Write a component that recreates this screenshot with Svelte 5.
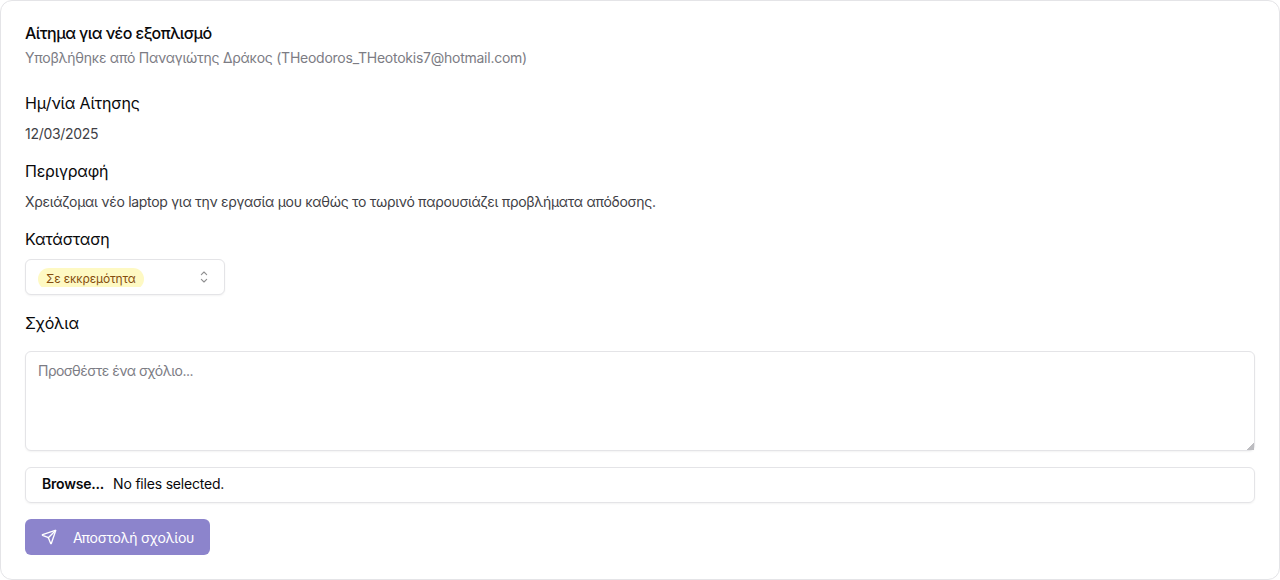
<script>
  let comment = $state('');
</script>

<div class="card">
  <header class="head">
    <h1>Αίτημα για νέο εξοπλισμό</h1>
    <p class="sub">Υποβλήθηκε από Παναγιώτης Δράκος (THeodoros_THeotokis7@hotmail.com)</p>
  </header>
  <section class="block">
    <h2>Ημ/νία Αίτησης</h2>
    <p>12/03/2025</p>
  </section>
  <section class="block">
    <h2>Περιγραφή</h2>
    <p>Χρειάζομαι νέο laptop για την εργασία μου καθώς το τωρινό παρουσιάζει προβλήματα απόδοσης.</p>
  </section>
  <section class="block">
    <h2>Κατάσταση</h2>
    <button class="select" type="button">
      <span class="value"><span class="badge">Σε εκκρεμότητα</span></span>
      <svg class="chev" width="16" height="16" viewBox="0 0 24 24" fill="none" stroke="currentColor" stroke-width="1.6" stroke-linecap="round" stroke-linejoin="round"><path d="m8 15.5 4 4 4-4"/><path d="m8 8.5 4-4 4 4"/></svg>
    </button>
  </section>
  <section class="comments">
    <h2>Σχόλια</h2>
    <textarea placeholder="Προσθέστε ένα σχόλιο..." bind:value={comment}></textarea>
    <div class="file"><b>Browse...</b><span>No files selected.</span></div>
    <button class="send" type="button">
      <svg width="16" height="16" viewBox="0 0 24 24" fill="none" stroke="currentColor" stroke-width="2" stroke-linecap="round" stroke-linejoin="round"><path d="M14.536 21.686a.5.5 0 0 0 .937-.024l6.5-19a.496.496 0 0 0-.635-.635l-19 6.5a.5.5 0 0 0-.024.937l7.93 3.18a2 2 0 0 1 1.112 1.11z"/><path d="m21.854 2.147-10.94 10.939"/></svg>
      Αποστολή σχολίου
    </button>
  </section>
</div>

<style>
  :global(body) { margin: 0; background: #fff; }
  .card {
    box-sizing: border-box; width: 1280px; height: 580px; padding: 24px;
    border: 1px solid #e4e4e7; border-radius: 12px; background: #fff;
    font-family: Inter, sans-serif; color: #09090b;
  }
  h1 { margin: 0; font-size: 16px; line-height: 16px; font-weight: 500; letter-spacing: -0.57px; }
  h2 { margin: 0; font-size: 16px; line-height: 24px; font-weight: 400; letter-spacing: -0.2px; }
  p { margin: 0; }
  .sub { margin-top: 7px; font-size: 14px; line-height: 20px; color: #7c7c84; letter-spacing: -0.25px; }
  .head { margin-bottom: 23px; }
  .block { margin-bottom: 16px; }
  .block p { margin-top: 9px; margin-bottom: -1px; font-size: 14px; line-height: 20px; color: #3f3f46; letter-spacing: -0.3px; }
  .select {
    box-sizing: border-box; display: flex; align-items: center; justify-content: space-between;
    width: 200px; height: 36px; margin-top: 8px; padding: 0 12px; border: 1px solid #e4e4e7;
    border-radius: 6px; background: #fff; color: #09090b; box-shadow: 0 1px 2px rgba(0,0,0,.05);
    font: inherit;
  }
  .chev { opacity: .45; }
  .value { display: block; height: 20px; overflow: hidden; }
  .badge { display: inline-block; padding: 3px 8px; border-radius: 999px; background: #fef9c3; color: #854d0e; font-size: 12px; line-height: 16px; font-weight: 400; letter-spacing: -0.12px; }
  .comments { display: flex; flex-direction: column; align-items: flex-start; }
  textarea {
    box-sizing: border-box; width: 100%; height: 100px; margin-top: 16px; padding: 9px 12px 7px;
    border: 1px solid #e4e4e7; border-radius: 6px; font: 14px/20px Inter, sans-serif; letter-spacing: -0.5px; box-shadow: 0 1px 2px rgba(0,0,0,.05);
    outline: none;
  }
  textarea::placeholder { color: #7c7c84; }
  textarea::-webkit-resizer { background: linear-gradient(135deg, transparent 75%, #bdbdc1 75%); }
  .file {
    box-sizing: border-box; display: flex; align-items: center; gap: 9px; width: 100%; height: 36px; margin-top: 16px;
    padding: 0 16px 3px; border: 1px solid #e4e4e7; border-radius: 6px; font-size: 14px; letter-spacing: -0.2px; box-shadow: 0 1px 2px rgba(0,0,0,.05);
  }
  .file b { font-weight: 600; }
  .send {
    display: flex; align-items: center; gap: 16px; height: 36px; margin-top: 16px; padding: 0 16px;
    border: 0; border-radius: 6px; background: #8c84cc; color: #fff; font: 400 14px Inter, sans-serif; letter-spacing: -0.25px;
  }
</style>
